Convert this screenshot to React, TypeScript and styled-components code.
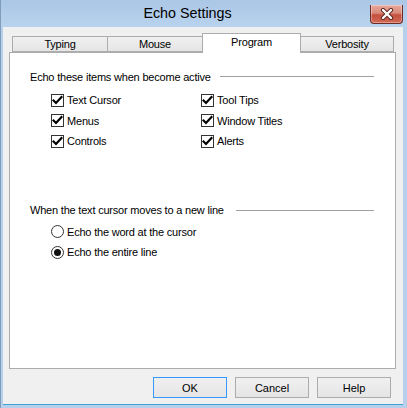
import React from "react";
import styled, { createGlobalStyle } from "styled-components";

const Global = createGlobalStyle`
  html, body { margin: 0; padding: 0; background: #b6d0eb; }
  body { font-family: "Liberation Sans", Arial, sans-serif; }
  * { box-sizing: border-box; }
`;

const Window = styled.div`
  width: 407px;
  height: 408px;
  display: flex;
  flex-direction: column;
  background: #b6d0eb;
  border-left: 1px solid #7f9db9;
`;

const TitleBar = styled.div`
  height: 27px;
  flex: none;
  display: flex;
  align-items: flex-start;
  padding: 0 4px 0 4px;
  background: linear-gradient(#abc7e6, #b9d3ee);
`;

const Title = styled.div`
  flex: 1;
  text-align: center;
  font-family: "Liberation Sans", Arial, sans-serif;
  font-size: 14.3px;
  line-height: 27px;
  color: #000;
`;

const CloseButton = styled.div`
  width: 33px;
  height: 19px;
  margin-top: 5px;
  border: 1px solid #6e2b26;
  border-top: none;
  border-radius: 0 0 4px 4px;
  background: linear-gradient(#e8a89b 0%, #d98a7a 45%, #c5503f 55%, #cf6a55 100%);
  display: flex;
  align-items: center;
  justify-content: center;
  box-shadow: inset 0 0 0 1px rgba(255, 255, 255, 0.35);
`;

const Client = styled.div`
  flex: 1;
  display: flex;
  flex-direction: column;
  margin: 0 4px 4px 2px;
  background: #f0f0f0;
  padding: 6px 7px 0 6px;
  box-shadow: 0 1px 0 #3fa0d6;
`;

const TabStrip = styled.div`
  display: flex;
  align-items: flex-end;
  padding-left: 3px;
  height: 19px;
  flex: none;
`;

const Tab = styled.div<{ $active?: boolean; $w: number }>`
  width: ${(p) => p.$w}px;
  margin-left: -1px;
  &:first-child { margin-left: 0; }
  height: ${(p) => (p.$active ? 20 : 16)}px;
  margin-bottom: ${(p) => (p.$active ? -1 : 0)}px;
  position: relative;
  z-index: ${(p) => (p.$active ? 2 : 1)};
  border: 1px solid #acacac;
  border-bottom: ${(p) => (p.$active ? "none" : "1px solid #acacac")};
  background: ${(p) =>
    p.$active ? "#ffffff" : "linear-gradient(#f0f0f0, #e5e5e5)"};
  display: flex;
  align-items: ${(p) => (p.$active ? "flex-start" : "center")};
  justify-content: center;
  padding-top: ${(p) => (p.$active ? 2 : 0)}px;
  font-size: 11px;
  letter-spacing: -0.2px;
  color: #000;
`;

const Panel = styled.div`
  flex: 1;
  background: #fff;
  border: 1px solid #acacac;
  padding: 17px 21px 0 20px;
  display: flex;
  flex-direction: column;
`;

const GroupHeader = styled.div<{ $gap: number; $top?: number }>`
  display: flex;
  align-items: center;
  height: 13px;
  margin-top: ${(p) => p.$top ?? 0}px;
  font-size: 11px;
  letter-spacing: -0.2px;
  color: #000;
  white-space: nowrap;
  &::after {
    content: "";
    flex: 1;
    height: 1px;
    margin-left: ${(p) => p.$gap}px;
    background: #a0a0a0;
  }
`;

const OptionGrid = styled.div<{ $top: number }>`
  display: grid;
  grid-template-columns: 150px 150px;
  grid-auto-rows: 20.5px;
  margin-top: ${(p) => p.$top}px;
  padding-left: 21px;
`;

const Option = styled.label`
  display: flex;
  align-items: center;
  gap: 3px;
  font-size: 11px;
  letter-spacing: -0.2px;
  color: #000;
  white-space: nowrap;
`;

const CheckBox = styled.span`
  width: 13px;
  height: 13px;
  border: 1px solid #333;
  background: #fff;
  display: flex;
  align-items: center;
  justify-content: center;
  flex: none;
`;

const Radio = styled.span<{ $on?: boolean }>`
  width: 13px;
  height: 13px;
  border-radius: 50%;
  border: 1px solid #333;
  background: #fff;
  display: flex;
  align-items: center;
  justify-content: center;
  flex: none;
  &::after {
    content: "";
    width: 7px;
    height: 7px;
    border-radius: 50%;
    background: ${(p) => (p.$on ? "#111" : "transparent")};
  }
`;

const ButtonRow = styled.div`
  display: flex;
  justify-content: flex-end;
  gap: 8px;
  padding: 8px 5px 6px 0;
  flex: none;
`;

const Button = styled.div<{ $default?: boolean }>`
  width: 74px;
  height: 21px;
  border: 1px solid ${(p) => (p.$default ? "#3399ff" : "#acacac")};
  background: linear-gradient(#f0f0f0, #e5e5e5);
  display: flex;
  align-items: center;
  justify-content: center;
  font-size: 11px;
  color: #000;
`;

const Check = () => (
  <svg width="11" height="11" viewBox="0 0 11 11">
    <path d="M1.5 5.5 L4 8 L9.5 2" stroke="#000" strokeWidth="2.2" fill="none" strokeLinecap="square" />
  </svg>
);

const CloseX = () => (
  <svg width="14" height="12" viewBox="0 0 14 12">
    <path d="M3 2 L11 10 M11 2 L3 10" stroke="#5a2520" strokeWidth="4.2" strokeLinecap="round" />
    <path d="M3 2 L11 10 M11 2 L3 10" stroke="#fff" strokeWidth="2.4" strokeLinecap="round" />
  </svg>
);

const items = [
  ["Text Cursor", "Tool Tips"],
  ["Menus", "Window Titles"],
  ["Controls", "Alerts"],
];

export default function App() {
  return (
    <>
      <Global />
      <Window>
        <TitleBar>
          <Title>Echo Settings</Title>
          <CloseButton>
            <CloseX />
          </CloseButton>
        </TitleBar>
        <Client>
          <TabStrip>
            <Tab $w={96}>Typing</Tab>
            <Tab $w={96}>Mouse</Tab>
            <Tab $w={99} $active>
              Program
            </Tab>
            <Tab $w={94}>Verbosity</Tab>
          </TabStrip>
          <Panel>
            <GroupHeader $gap={9}>Echo these items when become active</GroupHeader>
            <OptionGrid $top={7}>
              {items.flat().map((t) => (
                <Option key={t}>
                  <CheckBox>
                    <Check />
                  </CheckBox>
                  {t}
                </Option>
              ))}
            </OptionGrid>
            <GroupHeader $gap={12} $top={52}>
              When the text cursor moves to a new line
            </GroupHeader>
            <OptionGrid $top={5}>
              <Option style={{ gridColumn: "1 / span 2" }}>
                <Radio />
                Echo the word at the cursor
              </Option>
              <Option style={{ gridColumn: "1 / span 2" }}>
                <Radio $on />
                Echo the entire line
              </Option>
            </OptionGrid>
          </Panel>
          <ButtonRow>
            <Button $default>OK</Button>
            <Button>Cancel</Button>
            <Button>Help</Button>
          </ButtonRow>
        </Client>
      </Window>
    </>
  );
}
